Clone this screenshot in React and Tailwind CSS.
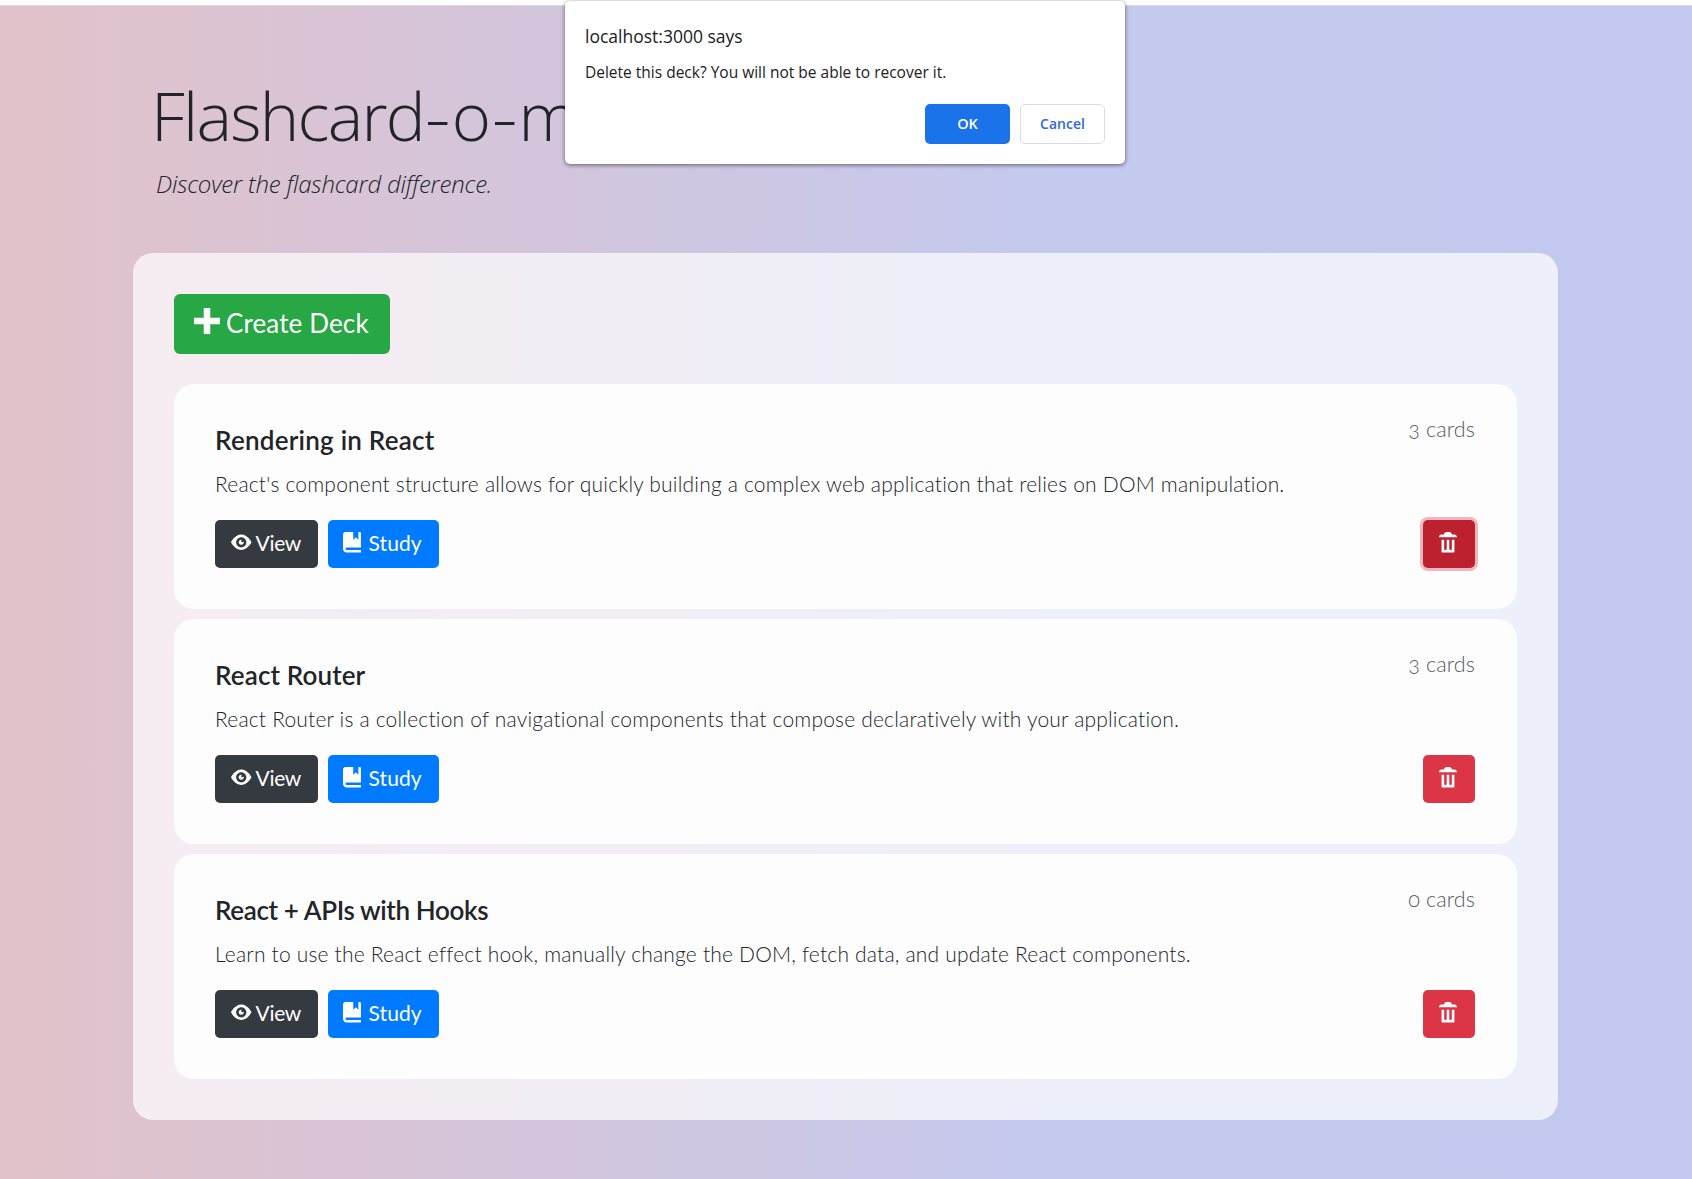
import React from "react";

const decks = [
  {
    name: "Rendering in React",
    nameTracking: "tracking-[0.24px]",
    description:
      "React's component structure allows for quickly building a complex web application that relies on DOM manipulation.",
    count: 3,
    focused: true,
  },
  {
    name: "React Router",
    nameTracking: "tracking-[0.12px]",
    description:
      "React Router is a collection of navigational components that compose declaratively with your application.",
    count: 3,
  },
  {
    name: "React + APIs with Hooks",
    nameTracking: "tracking-[-0.37px]",
    description:
      "Learn to use the React effect hook, manually change the DOM, fetch data, and update React components.",
    count: 0,
  },
];

function Icon({ d, className }) {
  return (
    <svg viewBox="0 0 8 8" fill="currentColor" className={className} aria-hidden="true">
      <path d={d} />
    </svg>
  );
}

const PLUS = "M3 0v3h-3v2h3v3h2v-3h3v-2h-3v-3h-2z";
const EYE =
  "M4.03 1c-2.53 0-4.03 3-4.03 3s1.5 3 4.03 3c2.47 0 3.97-3 3.97-3s-1.5-3-3.97-3zm-.03 1c1.11 0 2 .9 2 2 0 1.11-.89 2-2 2-1.1 0-2-.89-2-2 0-1.1.9-2 2-2zm0 1c-.55 0-1 .45-1 1s.45 1 1 1 1-.45 1-1c0-.1-.04-.19-.06-.28-.08.16-.24.28-.44.28-.28 0-.5-.22-.5-.5 0-.2.12-.36.28-.44-.09-.03-.18-.06-.28-.06z";
const BOOK =
  "M1 0c-.07 0-.13.01-.19.03-.39.08-.7.39-.78.78-.03.06-.03.12-.03.19v5.5c0 .83.67 1.5 1.5 1.5h5.5v-1h-5.5c-.28 0-.5-.22-.5-.5s.22-.5.5-.5h5.5v-5.5c0-.28-.22-.5-.5-.5h-.5v3l-1-1-1 1v-3h-3z";
const TRASH =
  "M3 0c-.55 0-1 .45-1 1h-1c-.55 0-1 .45-1 1h7c0-.55-.45-1-1-1h-1c0-.55-.45-1-1-1h-1zm-2 3v4.81c0 .11.08.19.19.19h4.63c.11 0 .19-.08.19-.19v-4.81h-1v3.5c0 .28-.22.5-.5.5s-.5-.22-.5-.5v-3.5h-1v3.5c0 .28-.22.5-.5.5s-.5-.22-.5-.5v-3.5h-1z";

function DeckCard({ deck }) {
  return (
    <article className="flex h-[225px] flex-col rounded-[20px] bg-white/90 pt-[35px] pr-[42px] pl-[41px]">
      <div className="flex items-start justify-between">
        <h2
          className={`pt-[6px] text-[26px] leading-[30px] font-semibold whitespace-nowrap ${deck.nameTracking}`}
        >
          {deck.name}
        </h2>
        <span className="text-[21.5px] leading-[20px] font-light tracking-[0.1px] text-[#555b62] oldstyle-nums">
          {deck.count} cards
        </span>
      </div>
      <p className="mt-[14px] text-[21px] leading-[30px] font-light tracking-[0.19px] whitespace-nowrap">
        {deck.description}
      </p>
      <div className="mt-[21px] flex items-center justify-between text-[21px] leading-[30px] text-white">
        <div className="flex gap-[10px]">
          <button className="flex h-12 w-[103px] rounded-[5px] bg-[#343a40] pt-[8px] pl-4 tracking-[-0.3px]">
            <Icon d={EYE} className="mt-[4px] mr-[4px] size-[20.5px]" />
            View
          </button>
          <button className="flex h-12 w-[111px] rounded-[5px] bg-[#007bff] pt-[8px] pl-[15px] tracking-[0.1px]">
            <Icon d={BOOK} className="mt-[4px] mr-[5px] size-[20.5px]" />
            Study
          </button>
        </div>
        <button
          aria-label="Delete deck"
          className={
            deck.focused
              ? "flex h-12 w-[52px] rounded-[5px] bg-[#bd2130] pt-[12px] pl-[16px] ring-[3px] ring-[#dc3545]/35"
              : "flex h-12 w-[52px] rounded-[5px] bg-[#dc3545] pt-[12px] pl-[16px]"
          }
        >
          <Icon d={TRASH} className="size-[20.5px]" />
        </button>
      </div>
    </article>
  );
}

function ConfirmDialog() {
  return (
    <div
      role="dialog"
      className="h-[163px] w-[560px] rounded-[5px] bg-white px-5 pt-[23px] font-['Open_Sans',sans-serif] text-[#202124] shadow-[0_1px_4px_rgba(0,0,0,0.55)]"
    >
      <h2 className="text-[17.5px] leading-6">localhost:3000 says</h2>
      <p className="mt-[14px] text-[15.5px] leading-5">
        Delete this deck? You will not be able to recover it.
      </p>
      <div className="mt-[22px] flex justify-end gap-[10px] text-[14.5px] font-semibold">
        <button className="h-10 w-[85px] rounded-[5px] bg-[#1a73e8] text-white">OK</button>
        <button className="h-10 w-[85px] rounded-[5px] border border-[#dadce0] pb-px text-[14px] text-[#3367d6]">
          Cancel
        </button>
      </div>
    </div>
  );
}

export default function App() {
  return (
    <div className="relative h-[1179px] w-[1692px] overflow-hidden bg-white pt-[5px] font-[Lato,sans-serif] text-[#212529]">
      <div className="h-full border-t border-[#dadce0] bg-[linear-gradient(90deg,#e2c2ca_0%,#d4c5db_30%,#c4c9ee_62%,#c3c8ee_100%)] px-[133px]">
        <header className="h-[247px] pt-[61px] pl-[18px] font-['Open_Sans',sans-serif] font-light">
          <h1 className="text-[67px] leading-[96px] font-light whitespace-nowrap">
            <span className="tracking-[-1.7px]">Flashcard</span>
            <span className="inline-block scale-x-120 px-[3px]">-</span>o
            <span className="inline-block scale-x-120 px-[3px]">-</span>m
          </h1>
          <p className="mt-[4px] pl-[5px] text-[24px] leading-[34px] tracking-[-0.2px] italic">
            Discover the flashcard difference.
          </p>
        </header>
        <main className="h-[867px] w-[1425px] rounded-[20px] bg-white/70 px-[41px] pt-[41px]">
          <button className="flex h-[60px] w-[216px] rounded-[6px] bg-[#28a745] pt-[11px] pl-[20px] text-[26px] leading-[37px] tracking-[0.13px] whitespace-nowrap text-white">
            <Icon d={PLUS} className="mt-[3px] mr-[6px] size-[26px]" />
            Create Deck
          </button>
          <section className="mt-[30px] flex flex-col gap-[10px]">
            {decks.map((deck) => (
              <DeckCard key={deck.name} deck={deck} />
            ))}
          </section>
        </main>
      </div>
      <div className="absolute top-px left-[565px]">
        <ConfirmDialog />
      </div>
    </div>
  );
}
